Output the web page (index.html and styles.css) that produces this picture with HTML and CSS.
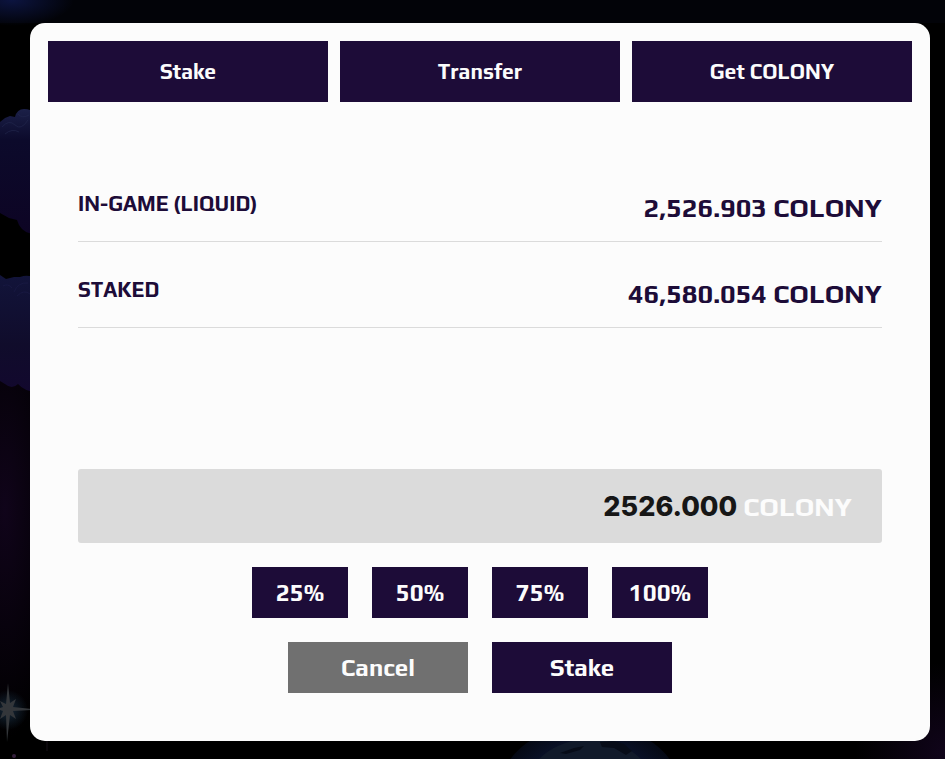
FILE: index.html
```html
<!DOCTYPE html>
<html lang="en">
    <head>
        <meta charset="UTF-8"/>
        <meta name="viewport" content="width=device-width, initial-scale=1">
        <title>Colony</title>
        <link rel="stylesheet" href="styles.css">
    </head>

    <body>
        <svg class="space" viewBox="0 0 945 759" preserveAspectRatio="none" aria-hidden="true">
            <defs>
                <radialGradient id="blue">
                    <stop offset="0" stop-color="#0c1440"/>
                    <stop offset="1" stop-color="#0c1440" stop-opacity="0"/>
                </radialGradient>
                <radialGradient id="purple">
                    <stop offset="0" stop-color="#10041a"/>
                    <stop offset="1" stop-color="#10041a" stop-opacity="0"/>
                </radialGradient>
                <radialGradient id="glow">
                    <stop offset="0" stop-color="#15293a"/>
                    <stop offset="1" stop-color="#15293a" stop-opacity="0"/>
                </radialGradient>
                <radialGradient id="halo">
                    <stop offset="0.6" stop-color="#0b1430"/>
                    <stop offset="1" stop-color="#050914"/>
                </radialGradient>
                <linearGradient id="rock" x1="0" y1="0" x2="0" y2="1">
                    <stop offset="0" stop-color="#1b2048"/>
                    <stop offset="0.25" stop-color="#0c0a2b"/>
                    <stop offset="1" stop-color="#0d0424"/>
                </linearGradient>
                <linearGradient id="rock2" x1="0" y1="0" x2="0" y2="1">
                    <stop offset="0" stop-color="#12143a"/>
                    <stop offset="0.6" stop-color="#100c2b"/>
                    <stop offset="1" stop-color="#12082e"/>
                </linearGradient>
            </defs>
            <rect width="945" height="759" fill="#000"/>
            <rect width="945" height="23" fill="#020308"/>
            <ellipse cx="12" cy="0" rx="62" ry="26" fill="url(#blue)"/>
            <ellipse cx="5" cy="510" rx="60" ry="230" fill="url(#purple)"/>
            <ellipse cx="945" cy="752" rx="90" ry="90" fill="url(#purple)"/>
            <path fill="url(#rock)" d="M0 122 L5 118 L10 116 L15 117 Q17 109 24 109 Q31 109 36 114 V234 Q24 234 19 225 L17 220 L9 218 L0 213Z"/>
            <path fill="none" stroke="#23284f" stroke-opacity="0.6" d="M2 127 Q9 119 15 125 T28 120 M5 134 Q12 128 19 132 M18 114 Q22 119 29 115"/>
            <path fill="url(#rock2)" d="M0 275 L6 279 L14 277 L20 277 Q28 274 36 278 V392 Q24 391 18 384 Q12 390 5 384 L0 381Z"/>
            <path fill="none" stroke="#1c1d48" stroke-opacity="0.6" d="M14 292 Q18 282 28 283 M17 296 Q24 289 30 294 M3 286 Q8 283 12 288"/>
            <circle cx="8" cy="710" r="20" fill="url(#glow)"/>
            <path fill="#33363a" d="M8 683 L10 703 L16 699 L13 707 L32 709 V710 L13 711 L16 719 L10 715 L7 742 L6 715 L0 719 L3 711 L0 710 V708 L3 707 L0 701 L6 704Z"/>
            <path d="M47 741 V751" stroke="#171019"/>
            <circle cx="14" cy="756" r="2" fill="#35203c"/>
            <ellipse cx="590" cy="790" rx="90" ry="66" fill="url(#halo)"/>
            <ellipse cx="590" cy="790" rx="64" ry="51" fill="#111a2a"/>
            <path fill="#070c18" d="M560 753 L574 748 L584 746 L580 750 L566 754Z M600 742 L614 741 L624 744 L632 751 L626 755 L614 748 L602 747Z"/>
        </svg>

        <main class="modal">
            <nav class="tabs">
                <button type="button" class="btn tab">Stake</button>
                <button type="button" class="btn tab">Transfer</button>
                <button type="button" class="btn tab">Get COLONY</button>
            </nav>

            <form class="content">
                <dl class="balances">
                    <div class="row">
                        <dt>IN-GAME (LIQUID)</dt>
                        <dd>2,526.903 COLONY</dd>
                    </div>
                    <div class="row">
                        <dt>STAKED</dt>
                        <dd>46,580.054 COLONY</dd>
                    </div>
                </dl>

                <div class="amount">
                    <input id="amount" type="text" inputmode="decimal" value="2526.000">
                    <label for="amount">COLONY</label>
                </div>

                <div class="buttons">
                    <button type="button" class="btn percent">25%</button>
                    <button type="button" class="btn percent">50%</button>
                    <button type="button" class="btn percent">75%</button>
                    <button type="button" class="btn percent">100%</button>
                </div>

                <div class="buttons">
                    <button type="button" class="btn action cancel">Cancel</button>
                    <button type="button" class="btn action">Stake</button>
                </div>
            </form>
        </main>
    </body>
</html>
```
FILE: styles.css
```css
*{
    box-sizing:border-box;
}
body{
    margin:0;
    padding:23px 15px 18px 30px;
    background:#000;
    color:#1d0c38;
    font-family:Play, "Noto Sans", "Open Sans", sans-serif;
    font-weight:700;
}
.space{
    position:fixed;
    top:0;
    left:0;
    width:100%;
    height:100%;
    z-index:-1;
}

.modal{
    padding:18px 18px 48px;
    border-radius:15px;
    background:#fcfcfc;
}
.tabs{
    display:flex;
    gap:12px;
}
.btn{
    border:none;
    padding:0;
    background:#1d0c38;
    color:#fcfcfc;
    font-family:inherit;
    font-weight:700;
    cursor:pointer;
}
.tab{
    flex:1;
    height:61px;
    font-size:21px;
}

.content{
    padding:54px 30px 0;
}
.balances{
    margin:0 0 141px;
}
.row{
    display:flex;
    justify-content:space-between;
    padding:37px 0 18px;
    border-bottom:1px solid #dbdbdb;
}
.row dt{
    font-size:21px;
    line-height:22px;
}
.row dd{
    margin:0;
    font-size:27px;
    line-height:30px;
}

.amount{
    display:flex;
    align-items:center;
    gap:6px;
    height:74px;
    padding:0 30px;
    border-radius:3px;
    background:#dbdbdb;
}
.amount input{
    flex:1;
    min-width:0;
    padding:0;
    border:none;
    outline:none;
    background:none;
    color:#161616;
    font-family:Inter, sans-serif;
    font-size:27px;
    font-weight:800;
    text-align:right;
}
.amount label{
    color:#fcfcfc;
    font-size:27px;
}

.buttons{
    display:flex;
    justify-content:center;
    gap:24px;
    margin-top:24px;
}
.percent,
.action{
    height:51px;
    font-size:24px;
}
.percent{
    width:96px;
}
.action{
    width:180px;
}
.cancel{
    background:#707070;
}
```
